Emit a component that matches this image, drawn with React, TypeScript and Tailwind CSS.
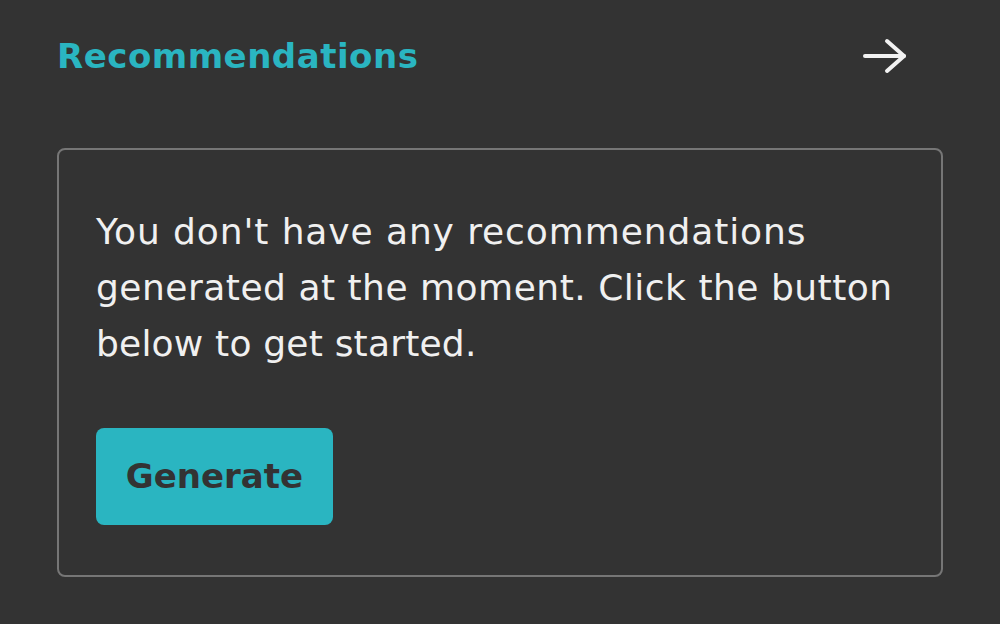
export default function App() {
  return (
    <div className="h-[624px] w-[1000px] bg-[#333333] px-[57px] pt-[32px] font-['DejaVu_Sans',sans-serif]">
      <div className="flex items-center justify-between">
        <h2 className="text-[34px] font-semibold leading-[48px] tracking-[0.5px] text-[#2ab5c1]">Recommendations</h2>
        <svg className="mr-[36px] h-[36px] w-[46px]" viewBox="0 0 46 36" fill="none" stroke="#f2f2f2" strokeWidth={4} strokeLinecap="round" strokeLinejoin="round">
          <path d="M4 18H43" />
          <path d="M26 3L43 18L26 33" />
        </svg>
      </div>
      <div className="mt-[68px] h-[429px] rounded-[8px] border-2 border-[#767676] px-[37px] pt-[54px]">
        <p className="whitespace-nowrap text-[36px] leading-[56px] text-[#f0f0f0]">
          <span className="block tracking-[0.9px]">You don't have any recommendations</span>
          <span className="block tracking-[0.5px]">generated at the moment. Click the button</span>
          <span className="block tracking-[0.2px]">below to get started.</span>
        </p>
        <button className="mt-[56px] h-[97px] w-[237px] rounded-[8px] bg-[#2ab5c1] text-[34px] font-bold text-[#333333]">
          Generate
        </button>
      </div>
    </div>
  )
}
